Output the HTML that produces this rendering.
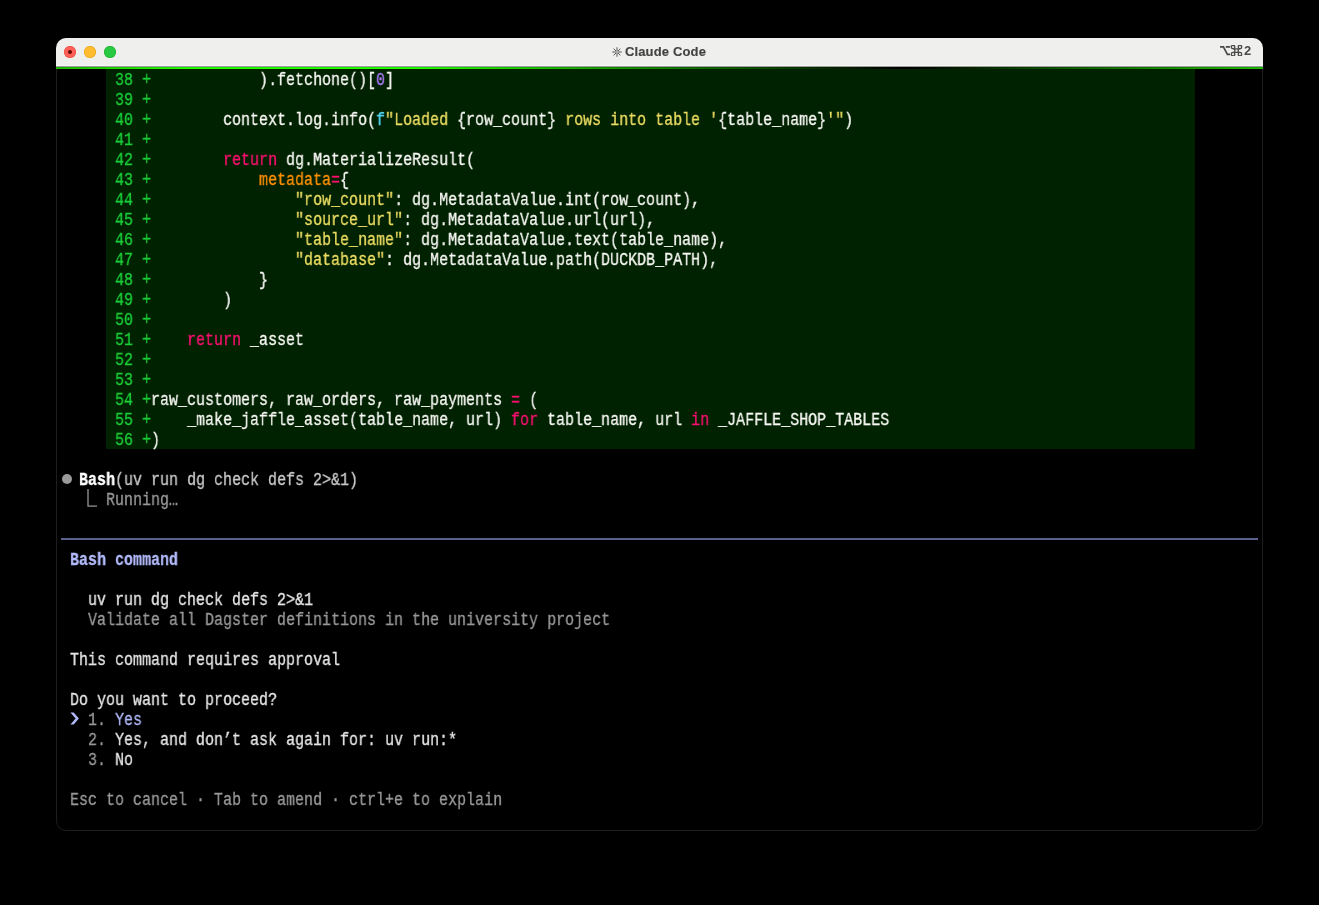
<!DOCTYPE html>
<html><head><meta charset="utf-8"><style>
html,body{margin:0;padding:0;background:#000;width:1319px;height:905px;overflow:hidden;position:relative}
.r,.title,.t2{will-change:transform}
.win{position:absolute;left:56px;top:38px;width:1205px;height:791px;border:1px solid #1d1d1d;border-radius:10px;background:#000;overflow:hidden}
.tb{position:absolute;left:56px;top:38px;width:1207px;height:28px;background:#efefed;border-radius:10px 10px 0 0}
.tbl{position:absolute;left:56px;top:65px;width:1207px;height:1px;background:#f6f6f4}
.tbd{position:absolute;left:56px;top:66px;width:1207px;height:1px;background:#9e9a9e}
.grn{position:absolute;left:56px;top:67px;width:1207px;height:1px;background:linear-gradient(90deg,rgb(24,168,0) 0%,rgb(24,235,0) 10.9%,rgb(24,235,0) 29.7%,rgb(12,114,0) 50%,#000 70.3%,rgb(10,90,0) 85%,rgb(24,168,0) 100%)}
.grn2{position:absolute;left:56px;top:68px;width:1207px;height:1px;background:linear-gradient(90deg,rgb(31,190,0) 0%,rgb(42,255,0) 10.9%,rgb(42,255,0) 29.7%,rgb(20,130,0) 50%,#000 70.3%,rgb(15,100,0) 85%,rgb(31,190,0) 100%)}
.title{position:absolute;left:6px;width:1319px;top:44px;letter-spacing:0.15px;text-align:center;font:bold 13px/16px "Liberation Sans",sans-serif;color:#434343;-webkit-text-stroke:0.15px #434343}
.code{position:absolute;left:106px;top:69px;width:1089px;height:380px;background:#002200}
.r{position:absolute;height:20px;font-family:"Liberation Mono",monospace;font-size:18px;line-height:20px;white-space:pre;transform:scaleX(0.83333);transform-origin:0 0;-webkit-text-stroke:0.3px currentColor}
.b{font-weight:bold}
.dot{position:absolute;border-radius:50%}
.sep{position:absolute;left:61px;top:538px;width:1197px;height:2px;background:#5b608c}
</style></head><body>
<div class="win"></div>
<div class="tb"></div><div class="tbl"></div><div class="tbd"></div><div class="grn"></div><div class="grn2"></div>
<div class="dot" style="left:64px;top:46px;width:12px;height:12px;background:#fe5f57;box-shadow:inset 0 0 0 0.5px #e2463f"></div>
<div class="dot" style="left:68px;top:50px;width:4px;height:4px;background:#6a0a06"></div>
<div class="dot" style="left:84px;top:46px;width:12px;height:12px;background:#febc2e;box-shadow:inset 0 0 0 0.5px #e1a116"></div>
<div class="dot" style="left:104px;top:46px;width:12px;height:12px;background:#28c840;box-shadow:inset 0 0 0 0.5px #1aab29"></div>
<div class="title">Claude Code</div>
<svg style="position:absolute;left:611px;top:45.6px" width="12" height="12" viewBox="0 0 12 12"><path d="M6.90 6.00L10.75 6.00M6.64 6.64L9.36 9.36M6.00 6.90L6.00 10.75M5.36 6.64L2.64 9.36M5.10 6.00L1.25 6.00M5.36 5.36L2.64 2.64M6.00 5.10L6.00 1.25M6.64 5.36L9.36 2.64" stroke="#4d4d4d" stroke-width="0.95" fill="none"/></svg>
<svg style="position:absolute;left:1219px;top:45px" width="24" height="11" viewBox="0 0 24 11"><g fill="none" stroke="#4a4a4a" stroke-width="1.7"><path d="M1 1.8H4.4L8.4 9.3H11M6.8 1.8H11"/><g stroke-width="1.35"><path d="M15.8 3.9V7.3M19.2 3.9V7.3M14 3.9H21M14 7.3H21"/><circle cx="14.05" cy="2.05" r="1.75"/><circle cx="20.95" cy="2.05" r="1.75"/><circle cx="14.05" cy="9.15" r="1.75"/><circle cx="20.95" cy="9.15" r="1.75"/></g></g></svg>
<div class="t2" style="position:absolute;left:1244px;top:43px;font:bold 13px/16px 'Liberation Sans',sans-serif;color:#4a4a4a">2</div>
<div class="code"></div>
<div class="r" style="top:70px;left:115.0px"><span style="color:#1acd38">38 +</span><span style="color:#f8f8f4">            </span><span style="color:#f8f8f4">).fetchone()[</span><span style="color:#b07dff">0</span><span style="color:#f8f8f4">]</span></div>
<div class="r" style="top:90px;left:115.0px"><span style="color:#1acd38">39 +</span></div>
<div class="r" style="top:110px;left:115.0px"><span style="color:#1acd38">40 +</span><span style="color:#f8f8f4">        </span><span style="color:#f8f8f4">context.log.info(</span><span style="color:#52d5f2">f</span><span style="color:#ecdd62">&quot;Loaded </span><span style="color:#f8f8f4">{row_count}</span><span style="color:#ecdd62"> rows into table &#x27;</span><span style="color:#f8f8f4">{table_name}</span><span style="color:#ecdd62">&#x27;&quot;</span><span style="color:#f8f8f4">)</span></div>
<div class="r" style="top:130px;left:115.0px"><span style="color:#1acd38">41 +</span></div>
<div class="r" style="top:150px;left:115.0px"><span style="color:#1acd38">42 +</span><span style="color:#f8f8f4">        </span><span style="color:#fd0f70">return</span><span style="color:#f8f8f4"> dg.MaterializeResult(</span></div>
<div class="r" style="top:170px;left:115.0px"><span style="color:#1acd38">43 +</span><span style="color:#f8f8f4">            </span><span style="color:#ff9000">metadata</span><span style="color:#fd0f70">=</span><span style="color:#f8f8f4">{</span></div>
<div class="r" style="top:190px;left:115.0px"><span style="color:#1acd38">44 +</span><span style="color:#f8f8f4">                </span><span style="color:#ecdd62">&quot;row_count&quot;</span><span style="color:#f8f8f4">: dg.MetadataValue.int(row_count),</span></div>
<div class="r" style="top:210px;left:115.0px"><span style="color:#1acd38">45 +</span><span style="color:#f8f8f4">                </span><span style="color:#ecdd62">&quot;source_url&quot;</span><span style="color:#f8f8f4">: dg.MetadataValue.url(url),</span></div>
<div class="r" style="top:230px;left:115.0px"><span style="color:#1acd38">46 +</span><span style="color:#f8f8f4">                </span><span style="color:#ecdd62">&quot;table_name&quot;</span><span style="color:#f8f8f4">: dg.MetadataValue.text(table_name),</span></div>
<div class="r" style="top:250px;left:115.0px"><span style="color:#1acd38">47 +</span><span style="color:#f8f8f4">                </span><span style="color:#ecdd62">&quot;database&quot;</span><span style="color:#f8f8f4">: dg.MetadataValue.path(DUCKDB_PATH),</span></div>
<div class="r" style="top:270px;left:115.0px"><span style="color:#1acd38">48 +</span><span style="color:#f8f8f4">            </span><span style="color:#f8f8f4">}</span></div>
<div class="r" style="top:290px;left:115.0px"><span style="color:#1acd38">49 +</span><span style="color:#f8f8f4">        </span><span style="color:#f8f8f4">)</span></div>
<div class="r" style="top:310px;left:115.0px"><span style="color:#1acd38">50 +</span></div>
<div class="r" style="top:330px;left:115.0px"><span style="color:#1acd38">51 +</span><span style="color:#f8f8f4">    </span><span style="color:#fd0f70">return</span><span style="color:#f8f8f4"> _asset</span></div>
<div class="r" style="top:350px;left:115.0px"><span style="color:#1acd38">52 +</span></div>
<div class="r" style="top:370px;left:115.0px"><span style="color:#1acd38">53 +</span></div>
<div class="r" style="top:390px;left:115.0px"><span style="color:#1acd38">54 +</span><span style="color:#f8f8f4">raw_customers, raw_orders, raw_payments </span><span style="color:#fd0f70">=</span><span style="color:#f8f8f4"> (</span></div>
<div class="r" style="top:410px;left:115.0px"><span style="color:#1acd38">55 +</span><span style="color:#f8f8f4">    </span><span style="color:#f8f8f4">_make_jaffle_asset(table_name, url) </span><span style="color:#fd0f70">for</span><span style="color:#f8f8f4"> table_name, url </span><span style="color:#fd0f70">in</span><span style="color:#f8f8f4"> _JAFFLE_SHOP_TABLES</span></div>
<div class="r" style="top:430px;left:115.0px"><span style="color:#1acd38">56 +</span><span style="color:#f8f8f4">)</span></div>
<div class="r" style="top:470px;left:79.0px"><span style="color:#ffffff" class="b">Bash</span><span style="color:#c9c9c9">(uv run dg check defs 2&gt;&amp;1)</span></div>
<div class="r" style="top:490px;left:106.0px"><span style="color:#999999">Running…</span></div>
<div class="r" style="top:550px;left:70.0px"><span style="color:#b1b9f9" class="b">Bash command</span></div>
<div class="r" style="top:590px;left:88.0px"><span style="color:#e6e6e6">uv run dg check defs 2&gt;&amp;1</span></div>
<div class="r" style="top:610px;left:88.0px"><span style="color:#999999">Validate all Dagster definitions in the university project</span></div>
<div class="r" style="top:650px;left:70.0px"><span style="color:#e6e6e6">This command requires approval</span></div>
<div class="r" style="top:690px;left:70.0px"><span style="color:#e6e6e6">Do you want to proceed?</span></div>
<div class="r" style="top:710px;left:88.0px"><span style="color:#999999">1. </span><span style="color:#b1b9f9">Yes</span></div>
<div class="r" style="top:730px;left:88.0px"><span style="color:#999999">2. </span><span style="color:#e6e6e6">Yes, and don’t ask again for: uv run:*</span></div>
<div class="r" style="top:750px;left:88.0px"><span style="color:#999999">3. </span><span style="color:#e6e6e6">No</span></div>
<div class="r" style="top:790px;left:70.0px"><span style="color:#999999">Esc to cancel · Tab to amend · ctrl+e to explain</span></div>
<div class="dot" style="left:62px;top:474px;width:10px;height:10px;background:#9a9a9a"></div>
<svg style="position:absolute;left:86px;top:488px" width="12" height="20" viewBox="0 0 12 20"><path d="M2 1V18.1H11" fill="none" stroke="#959595" stroke-width="1.3"/></svg>
<div class="sep"></div>
<svg style="position:absolute;left:70px;top:712px" width="10" height="13" viewBox="0 0 10 13"><path d="M0.4 0.4H3.7L8.9 6.4L3.7 12.4H0.4L5.6 6.4Z" fill="#b1b9f9"/></svg>
</body></html>
